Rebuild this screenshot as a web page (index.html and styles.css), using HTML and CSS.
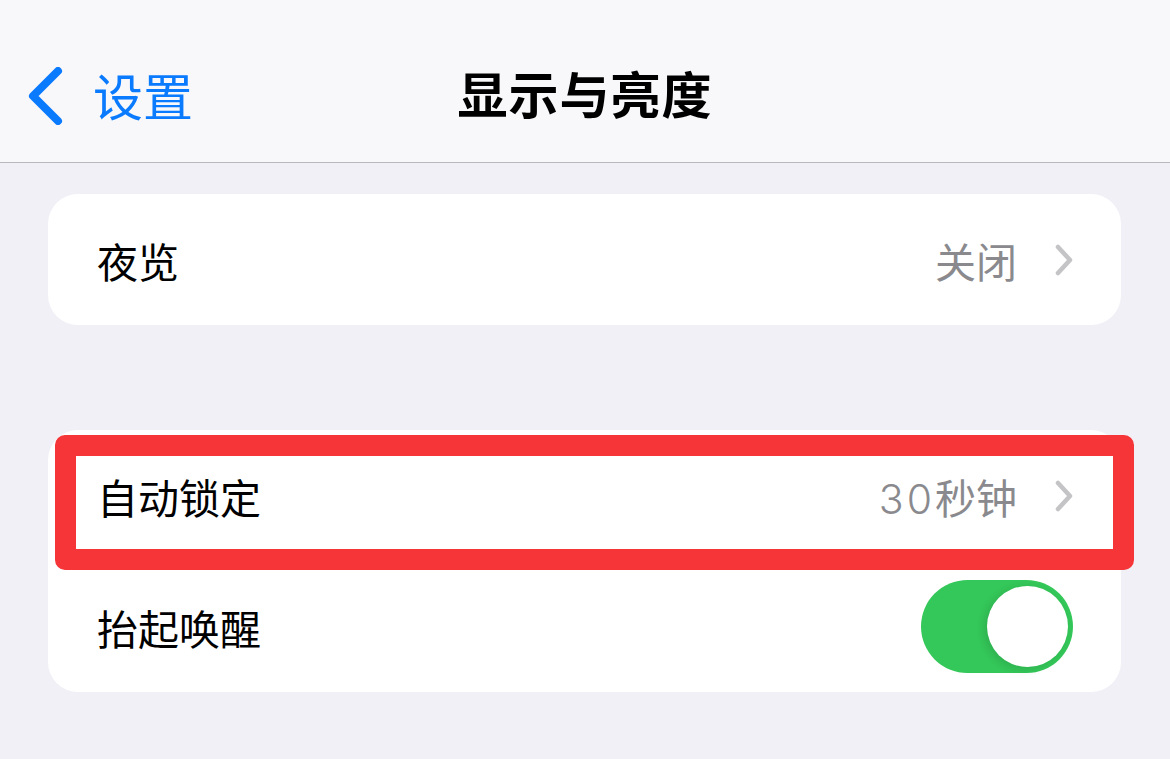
FILE: index.html
```html
<!DOCTYPE html>
<html lang="zh-CN">
<head>
    <meta charset="UTF-8">
    <meta name="viewport" content="width=device-width, initial-scale=1.0">
    <title>显示与亮度</title>
    <link rel="stylesheet" href="styles.css">
</head>
<body>
    <!-- Navigation bar -->
    <header class="navbar">
        <a class="back" href="#">
            <svg class="back-icon" width="36" height="58" viewBox="0 0 36 58">
                <path d="M31 4 L6 29 L31 54" fill="none" stroke="#0a7aff" stroke-width="8" stroke-linecap="round" stroke-linejoin="round"/>
            </svg>
            <span class="back-label">设置</span>
        </a>
        <h1 class="title">显示与亮度</h1>
    </header>

    <main class="content">
        <section class="group">
            <div class="row">
                <span class="label">夜览</span>
                <span class="value">关闭</span>
                <svg class="chevron" width="18" height="32" viewBox="0 0 18 32">
                    <path d="M3 3 L15 16 L3 29" fill="none" stroke="#c4c4c7" stroke-width="4.5" stroke-linecap="round" stroke-linejoin="round"/>
                </svg>
            </div>
        </section>

        <section class="group group-lock">
            <div class="row">
                <span class="label">自动锁定</span>
                <span class="value"><span class="num">30</span>秒钟</span>
                <svg class="chevron" width="18" height="32" viewBox="0 0 18 32">
                    <path d="M3 3 L15 16 L3 29" fill="none" stroke="#c4c4c7" stroke-width="4.5" stroke-linecap="round" stroke-linejoin="round"/>
                </svg>
            </div>
            <div class="row">
                <span class="label">抬起唤醒</span>
                <span class="toggle on"><span class="knob"></span></span>
            </div>
            <!-- red highlight annotation -->
            <div class="highlight"></div>
        </section>
    </main>
</body>
</html>
```

FILE: styles.css
```css
/* Settings page: display & brightness */
* {
    box-sizing: border-box;
}

body {
    margin: 0;
    background-color: #f1f0f6;
    font-family: "Noto Sans CJK SC", "Noto Sans", sans-serif;
    color: #000;
}

.navbar {
    position: relative;
    height: 163px;
    background-color: #f8f8fa;
    border-bottom: 1px solid #b9b9bd;
    display: flex;
    align-items: center;
    justify-content: center;
}

.back {
    position: absolute;
    left: 27px;
    top: 67px;
    display: flex;
    align-items: center;
    gap: 30px;
    text-decoration: none;
    color: #0a7aff;
}

.back-label {
    font-size: 50px;
    line-height: 58px;
    margin-top: -4px;
}

.title {
    margin: 0;
    padding-top: 22px;
    font-size: 50px;
    font-weight: 700;
    letter-spacing: 1px;
}

.content {
    padding: 31px 49px 0 48px;
    display: flex;
    flex-direction: column;
    gap: 105px;
}

.group {
    position: relative;
    background-color: #fff;
    border-radius: 30px;
}

.row {
    height: 131px;
    display: flex;
    align-items: center;
    padding: 0 48px 0 49px;
    font-size: 41px;
}

.label {
    flex: 1;
}

.value {
    color: #8a8a8e;
    margin-right: 38px;
}

.value .num {
    font-family: "Inter", "Noto Sans", sans-serif;
    font-weight: 300;
    letter-spacing: 3px;
}

.chevron {
    display: block;
}

.toggle {
    width: 152px;
    height: 93px;
    border-radius: 47px;
    background-color: #34c759;
    position: relative;
}

.toggle .knob {
    position: absolute;
    top: 6px;
    right: 5px;
    width: 81px;
    height: 81px;
    border-radius: 50%;
    background-color: #fff;
    box-shadow: -3px 2px 8px rgba(0, 0, 0, 0.12);
}

.highlight {
    position: absolute;
    left: 7px;
    top: 5px;
    width: 1079px;
    height: 135px;
    border: 21px solid #f63538;
    border-radius: 10px;
}
```
